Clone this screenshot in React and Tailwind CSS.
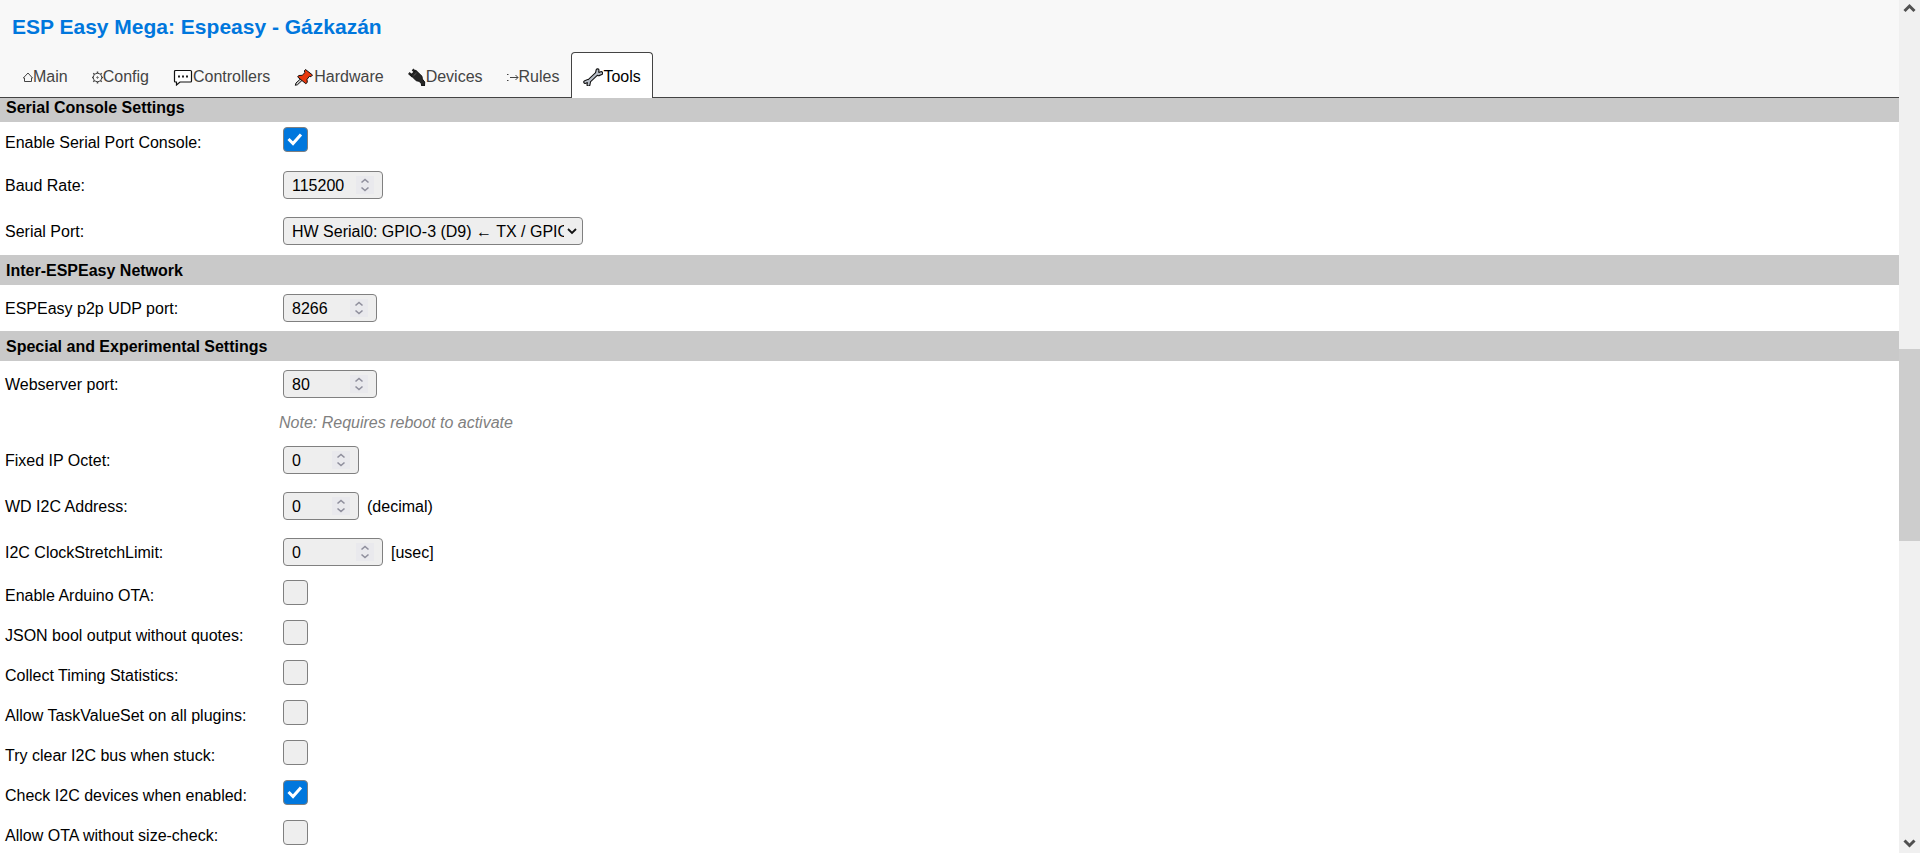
import { useState } from 'react'

const TABS = [
  { name: 'Main', icon: HomeIcon },
  { name: 'Config', icon: GearIcon },
  { name: 'Controllers', icon: SpeechIcon },
  { name: 'Hardware', icon: PinIcon },
  { name: 'Devices', icon: PlugIcon },
  { name: 'Rules', icon: RulesIcon },
  { name: 'Tools', icon: WrenchIcon },
]

function HomeIcon() {
  return (
    <svg width="11" height="18" viewBox="0 0 11 18" fill="none" stroke="currentColor" strokeWidth="1">
      <path d="M2.500 13.500v-3.500H1.300L6 5l4.500 5H9.500v3.500z" />
    </svg>
  )
}

function GearIcon() {
  return (
    <svg width="11" height="18" viewBox="0 0 11 18" fill="none" stroke="currentColor">
      <circle cx="5.500" cy="9.500" r="4.200" />
      <circle cx="5.500" cy="9.500" r=".7" />
      <path
        strokeWidth="1.500"
        d="M5.500 3.500v1.700M5.500 13.800v1.700M-.5 9.500h1.700M9.800 9.500h1.700M1.300 5.300l1.200 1.200M8.500 12.500l1.200 1.200M1.300 13.700l1.200-1.200M8.500 6.500l1.200-1.200"
      />
    </svg>
  )
}

function SpeechIcon() {
  return (
    <svg width="20" height="18" viewBox="0 0 20 18">
      <path d="M2.500 2.500h15q1 0 1 1v9.500q0 1-1 1H7l-3.500 3v-3h-1q-1 0-1-1V3.500q0-1 1-1z" fill="#fff" stroke="#111" strokeWidth="1.200" />
      <path d="M5 7.500h2v2H5zM9 7.500h2v2H9zM13 7.500h2v2h-2z" fill="#222" />
    </svg>
  )
}

function PinIcon() {
  return (
    <svg width="20" height="18" viewBox="0 0 20 18" strokeLinejoin="round">
      <path d="M1.300 17.300l.7-2.300 5.500-5 1.500 1.500-5.500 5.200z" fill="#ccc" stroke="#111" strokeWidth="1" />
      <path d="M11.500 1.500l7 5.500-1.500 1.700-1.700-.3-2.300 3 .3 3-1.500 1.300L3.700 9l1-1.500 3.500-.2 2.800-2.800-.7-1.500z" fill="#e8380d" stroke="#111" strokeWidth="1" />
    </svg>
  )
}

function PlugIcon() {
  return (
    <svg width="18" height="18" viewBox="0 0 18 18" strokeLinejoin="round">
      <path d="M.8 5l4 3.500M4.500 1.500l4 3.500" stroke="#222" strokeWidth="2.400" />
      <path d="M2.500 7l5.300-4.700L14 8.300l.3 2.700 2.400 3-.2 4h-2.700l-.6-2.500-2.200-2.300-2.700-.4z" fill="#262626" stroke="#111" />
      <path d="M5.500 7.800l3-2.800" stroke="#666" strokeWidth=".8" />
    </svg>
  )
}

function RulesIcon() {
  return (
    <svg width="12" height="18" viewBox="0 0 12 18" fill="none" stroke="currentColor">
      <path d="M0 6.500h1.500M0 12.500h1.500M3 9.500h8M8.500 7l2.500 2.500L8.500 12" />
    </svg>
  )
}

function WrenchIcon() {
  return (
    <svg width="20" height="18" viewBox="0 0 20 18" strokeLinejoin="round" strokeLinecap="round">
      <g fill="none" stroke="#111">
        <path d="M5.500 13.500l9-8.500" strokeWidth="4.200" />
        <path d="M14.500 2.300l-.5 3 1.500 1 2.700-1.200M2.200 14l2.500-1 1.300 1-.5 2.700" strokeWidth="4" />
      </g>
      <g fill="none" stroke="#b8bec8">
        <path d="M5.500 13.500l9-8.500" strokeWidth="2.200" />
        <path d="M14.500 2.300l-.5 3 1.500 1 2.700-1.200M2.200 14l2.500-1 1.300 1-.5 2.700" strokeWidth="1.800" />
      </g>
    </svg>
  )
}

function Section({ children }) {
  return (
    <h2 className="flex h-[30px] items-center bg-[#c9c9c9] pt-[2px] pl-[6px] font-bold">
      {children}
    </h2>
  )
}

function Row({ id, label, children }) {
  return (
    <div className="flex h-[46px] items-center">
      <label htmlFor={id} className="w-[283px] pt-[2px] pl-[5px]">{label}</label>
      {children}
    </div>
  )
}

function NumberRow({ id, label, value, width, unit }) {
  return (
    <Row id={id} label={label}>
      <div className={`relative ${width}`}>
        <input
          id={id}
          type="number"
          defaultValue={value}
          className="block h-[28px] w-full appearance-none rounded-[4px] border border-[#808080] bg-[#eeeeee] pt-[2px] pl-[8px] [-moz-appearance:textfield] [&::-webkit-inner-spin-button]:appearance-none"
        />
        <svg
          className="pointer-events-none absolute top-[5px] right-[9px] bg-[#e9e9ed]"
          width="18"
          height="18"
          viewBox="0 0 18 18"
          fill="none"
          stroke="#8f8f9d"
          strokeWidth="1.600"
        >
          <path d="M5.500 6.500L9 3.500l3.500 3M5.500 11.500l3.500 3 3.500-3" />
        </svg>
      </div>
      {unit && <span className="pt-[2px] pl-[8px]">{unit}</span>}
    </Row>
  )
}

function CheckRow({ id, label, checked: initial = false }) {
  const [checked, setChecked] = useState(initial)

  return (
    <div className="flex h-[40px]">
      <label htmlFor={id} className="w-[283px] self-center pt-[2px] pl-[5px]">{label}</label>
      <div className="relative pt-[5px]">
        <input
          id={id}
          type="checkbox"
          checked={checked}
          onChange={(e) => setChecked(e.target.checked)}
          className="block size-[25px] appearance-none rounded-[4px] border border-[#808080] bg-[#eeeeee] checked:bg-[#0077dd]"
        />
        {checked && (
          <svg
            className="pointer-events-none absolute top-[5px] left-0"
            width="25"
            height="25"
            viewBox="0 0 25 25"
            fill="none"
            stroke="#fff"
            strokeWidth="3"
          >
            <path d="M5.500 12l4.500 4.500L18 7.500" />
          </svg>
        )}
      </div>
    </div>
  )
}

function ScrollBar() {
  return (
    <div className="flex w-[21px] shrink-0 flex-col items-center bg-[#f0f0f0]">
      <svg width="21" height="17" viewBox="0 0 21 17" fill="none" stroke="#505050" strokeWidth="3">
        <path d="M5.500 11l5-5 5 5" />
      </svg>
      <div className="grow-[332]" />
      <div className="h-[192px] w-full bg-[#cdcdcd]" />
      <div className="grow-[295]" />
      <svg width="21" height="17" viewBox="0 0 21 17" fill="none" stroke="#505050" strokeWidth="3">
        <path d="M5.500 4.500l5 5 5-5" />
      </svg>
    </div>
  )
}

const App = () => {
  return (
    <div className="flex h-screen overflow-hidden bg-white font-['Liberation_Sans',Arial,sans-serif] text-[16px] leading-[20px] text-black">
      <div className="flex min-w-0 grow flex-col">
        <header className="z-10 shrink-0 border-b border-[#444444] bg-[#f8f8f8]">
          <h1 className="px-[12px] pt-[14px] pb-[12px] text-[21px] leading-[26px] font-bold text-[#0077dd]">
            ESP Easy Mega: Espeasy - Gázkazán
          </h1>
          <nav className="-mb-px flex pl-[10px]">
            {TABS.map(({ name, icon: Icon }) => (
              <a
                key={name}
                href={`#${name.toLowerCase()}`}
                className={
                  name === 'Tools'
                    ? 'flex h-[46px] items-center rounded-t-[4px] border border-b-0 border-[#444444] bg-white px-[11px] pt-[3px] text-black'
                    : 'flex h-[46px] items-center border border-transparent px-[11px] pt-[3px] text-[#444444]'
                }
              >
                <Icon />
                {name}
              </a>
            ))}
          </nav>
        </header>

        <form className="-mt-[6px] min-h-0 grow overflow-hidden">
          <Section>Serial Console Settings</Section>
          <CheckRow id="serial" label="Enable Serial Port Console:" checked />
          <NumberRow id="baud" label="Baud Rate:" value={115200} width="w-[100px]" />
          <Row id="port" label="Serial Port:">
            <div className="relative w-[300px]">
              <select
                id="port"
                className="block h-[28px] w-full appearance-none rounded-[4px] border border-[#808080] bg-[#eeeeee] pt-[2px] pr-[18px] pl-[8px]"
              >
                <option>HW Serial0: GPIO-3 (D9) ← TX / GPIO-1 (D10) → RX</option>
              </select>
              <svg
                className="pointer-events-none absolute top-[9px] right-[6px]"
                width="10"
                height="10"
                viewBox="0 0 10 10"
                fill="none"
                stroke="#111"
                strokeWidth="1.800"
              >
                <path d="M1 3l4 4 4-4" />
              </svg>
            </div>
          </Row>

          <div className="pt-px">
            <Section>Inter-ESPEasy Network</Section>
          </div>
          <NumberRow id="udp" label="ESPEasy p2p UDP port:" value={8266} width="w-[94px]" />

          <Section>Special and Experimental Settings</Section>
          <NumberRow id="web" label="Webserver port:" value={80} width="w-[94px]" />
          <p className="flex h-[30px] items-center pt-[2px] pl-[279px] text-[#808080] italic">
            Note: Requires reboot to activate
          </p>
          <NumberRow id="octet" label="Fixed IP Octet:" value={0} width="w-[76px]" />
          <NumberRow id="wd" label="WD I2C Address:" value={0} width="w-[76px]" unit="(decimal)" />
          <NumberRow id="stretch" label="I2C ClockStretchLimit:" value={0} width="w-[100px]" unit="[usec]" />
          <CheckRow id="ota" label="Enable Arduino OTA:" />
          <CheckRow id="json" label="JSON bool output without quotes:" />
          <CheckRow id="timing" label="Collect Timing Statistics:" />
          <CheckRow id="taskvalue" label="Allow TaskValueSet on all plugins:" />
          <CheckRow id="i2cbus" label="Try clear I2C bus when stuck:" />
          <CheckRow id="i2ccheck" label="Check I2C devices when enabled:" checked />
          <CheckRow id="sizecheck" label="Allow OTA without size-check:" />
        </form>
      </div>
      <ScrollBar />
    </div>
  )
}

export default App
